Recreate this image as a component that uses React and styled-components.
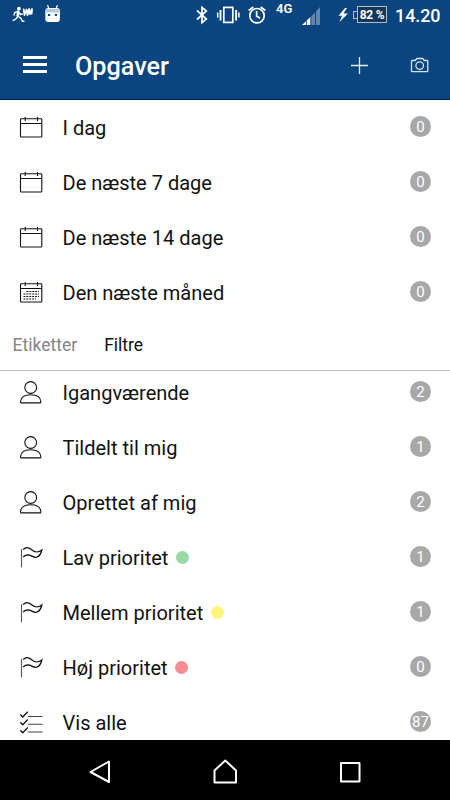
import React from "react"
import styled, { createGlobalStyle } from "styled-components"

const GlobalStyle = createGlobalStyle`
	* {
		box-sizing: border-box;
	}
	body {
		margin: 0;
		background: #fff;
		font-family: Roboto, "Noto Sans", sans-serif;
	}
	svg {
		display: block;
		flex: none;
	}
`

const Screen = styled.div`
	display: flex;
	flex-direction: column;
	width: 450px;
	height: 800px;
	overflow: hidden;
	background: #fff;
	color: #111;
`

const StatusBar = styled.div`
	display: flex;
	justify-content: space-between;
	height: 30px;
	flex: none;
	background: #0a4580;
	color: #fff;
`

const Clock = styled.div`
	width: 63px;
	padding-left: 8px;
	font-size: 18px;
	font-weight: 500;
	line-height: 32px;
	letter-spacing: -0.1px;
	white-space: nowrap;
`

const StatusRight = styled.div`
	display: flex;
`

const Network = styled.div`
	width: 26px;
	padding-left: 1px;
	font-size: 13px;
	font-weight: 600;
	line-height: 18px;
`

const Battery = styled.div`
	display: flex;
	align-items: center;
	width: 34px;
	height: 17px;
	margin-top: 6px;
`

const BatteryTip = styled.div`
	width: 4px;
	height: 8px;
	border: 1px solid #b9bdc2;
	border-right: 0;
`

const BatteryBody = styled.div`
	width: 30px;
	height: 17px;
	border: 1px solid #b9bdc2;
	background: #12365c;
	font-size: 12px;
	font-weight: 700;
	line-height: 16px;
	text-align: center;
	letter-spacing: -0.3px;
	white-space: nowrap;
`

const Toolbar = styled.header`
	display: flex;
	align-items: center;
	height: 70px;
	flex: none;
	padding: 0 20px 0 23px;
	border-bottom: 1px solid #02245c;
	background: #0a4580;
	color: #fff;
`

const MenuButton = styled.div`
	display: flex;
	flex-direction: column;
	gap: 4px;
	width: 24px;
`

const MenuLine = styled.span`
	height: 3px;
	background: #fff;
`

const Title = styled.h1`
	flex: 1;
	margin: 4px 0 0 28px;
	font-size: 25.2px;
	font-weight: 500;
	line-height: 30px;
`

const Actions = styled.div`
	display: flex;
	gap: 41px;
`

const List = styled.div`
	flex: none;
`

const ScrollArea = styled.div`
	flex: 1;
	min-height: 0;
	overflow: hidden;
`

const Scrolled = styled.div`
	margin-top: -6px;
`

const Row = styled.div`
	display: flex;
	align-items: center;
	height: 55px;
	padding: 0 19px;
`

const Label = styled.div`
	display: flex;
	align-items: center;
	flex: 1;
	margin: 1px 0 0 18.5px;
	font-size: 20.05px;
	line-height: 26px;
`

const Dot = styled.span`
	width: 13px;
	height: 13px;
	margin: -2px 0 0 7.5px;
	border-radius: 50%;
	background: ${({ $color }) => $color};
`

const Badge = styled.div`
	width: 21px;
	height: 21px;
	margin-bottom: 2px;
	border-radius: 50%;
	background: #a8a8a8;
	color: #fff;
	font-size: 15px;
	line-height: 22px;
	text-align: center;
`

const Tabs = styled.div`
	display: flex;
	gap: 27px;
	height: 51px;
	flex: none;
	padding-left: 12.6px;
	border-bottom: 1px solid #bdbdbd;
`

const Tab = styled.div`
	color: ${({ $active }) => ($active ? "#111" : "#858585")};
	font-size: 17.5px;
	line-height: 51px;
`

const NavBar = styled.nav`
	display: flex;
	align-items: center;
	justify-content: space-between;
	height: 60px;
	flex: none;
	padding: 4px 87px 0 87px;
	background: #000;
`

const Icon = ({ children }) => (
	<svg width='25' height='25' viewBox='0 0 25 25' fill='none' stroke='#111' strokeWidth='1.1'>
		{children}
	</svg>
)

const CalendarFrame = () => (
	<>
		<rect x='1.5' y='3.7' width='21.3' height='18.3' rx='0.8' />
		<path d='M1.5 8.5h21.3M6.2 2v4M18.5 2v4' />
	</>
)

const CalendarIcon = () => (
	<Icon>
		<CalendarFrame />
	</Icon>
)

const MonthIcon = () => (
	<Icon>
		<CalendarFrame />
		<path d='M7.5 11.5H20M4.5 14H20M4.5 16.5H20M4.500 19H17' strokeDasharray='1.9 1' strokeWidth='1.2' />
	</Icon>
)

const PersonIcon = () => (
	<Icon>
		<circle cx='11.7' cy='7.5' r='5.9' />
		<path d='M2.6 22.9C1.8 22.9 1.4 22.4 1.5 21.5C2 17.2 6.2 14.8 11.7 14.8S21.4 17.2 21.9 21.5C22 22.4 21.6 22.9 20.8 22.9Z' />
	</Icon>
)

const FlagIcon = () => (
	<Icon>
		<path d='M2.5 4v18.3' stroke='#555' />
		<path
			d='M4.2 4.5C6.5 2.2 9.5 2.2 12 4.3C15 7 18 8.6 22.8 5C22 8.5 20.8 11.5 17.6 12.2C14 12.9 12.5 10 9 9.9C7 9.9 5.6 10.6 4.2 12'
			strokeWidth='1.3'
		/>
	</Icon>
)

const ChecklistIcon = () => (
	<Icon>
		<path d='M8.8 6.5H23.5M8.8 14.3H23.5M8.8 22H23.5' stroke='#444' />
		<path d='M1.3 4.5L3.7 7L8.8 1.7M1.3 12.2L3.7 14.7L8.8 9.5M1.3 20.2L3.7 22.7L8.8 17.5' strokeWidth='1.3' />
	</Icon>
)

const RunnerIcon = () => (
	<svg width='60' height='30' viewBox='0 0 60 30' fill='none' stroke='#fff' strokeLinecap='round' strokeLinejoin='round'>
		<circle cx='18.9' cy='8.7' r='1.9' fill='#fff' stroke='none' />
		<path d='M18.3 11.5L17.7 16' strokeWidth='2.6' />
		<path d='M17.5 11.7L14.8 12.5L14 15M19 12.5L20.5 14.5L22.3 14M17.7 16.5L16 18.8L13.2 20.4M18.3 16.5L21 18.3L22.3 21.3H24' strokeWidth='1.4' />
		<path d='M23.7 9.5L24.5 15L26.5 9.5L27.5 15L29.2 9L30 14L32 9L31.7 13.5' strokeWidth='1.8' />
		<path d='M47.7 5.5L49 9M57.3 5.5L56 9' strokeWidth='1.2' />
		<rect x='45.3' y='8' width='14.6' height='14' rx='3' fill='#fff' stroke='none' />
		<rect x='45.8' y='9' width='13.6' height='3.4' rx='1' fill='#b5cbe0' stroke='none' />
		<rect x='48' y='14' width='2.2' height='2' fill='#0a4580' stroke='none' />
		<rect x='54.8' y='14' width='2.2' height='2' fill='#0a4580' stroke='none' />
	</svg>
)

const DeviceIcons = () => (
	<svg width='80' height='30' viewBox='195 0 80 30' fill='none' stroke='#fff' strokeWidth='1.7'>
		<path d='M197 10.5L206.3 19L202 22.6V7.3L206.3 11L197 19.5' />
		<rect x='223.8' y='7.4' width='9' height='15' />
		<path d='M220.5 10v10.5M236.1 10v10.5' strokeWidth='1.9' />
		<path d='M217.7 12.5v5M238.9 12.5v5' strokeWidth='1.5' />
		<circle cx='257' cy='15.7' r='7.2' />
		<path d='M256.6 11v5L260 18.3M248.7 10.5L253.3 7M265.3 10.5L260.7 7' />
	</svg>
)

const SignalIcon = () => (
	<svg width='52' height='30' viewBox='301 0 52 30'>
		<path d='M302 25L306 21.3V25Z' fill='#fff' />
		<path d='M306.8 20.5L310.3 17V25H306.8Z' fill='#fff' />
		<path d='M311.3 16L315 12.7V25H311.3Z' fill='#6487ad' />
		<path d='M316 11.6L320 7V25H316Z' fill='#6487ad' />
		<path d='M345 8L338.5 15.8H342L339.5 22L348 13.5H343.5L347 8Z' fill='#fff' />
	</svg>
)

const PlusIcon = () => (
	<svg width='20' height='20' viewBox='0 0 20 20' fill='none' stroke='#e6edf4' strokeWidth='1.3'>
		<path d='M10.5 2v17M2 10.5h17' />
	</svg>
)

const CameraIcon = () => (
	<svg width='20' height='20' viewBox='0 0 20 20' fill='none' stroke='#d6e2ee' strokeWidth='1.3' strokeLinejoin='round'>
		<path d='M2.3 5.5H5.2L6.8 3.5H12.8L14.4 5.5H17.1Q17.8 5.5 17.8 6.2V15.9Q17.8 16.7 17.1 16.7H2.3Q1.5 16.7 1.5 15.9V6.2Q1.5 5.5 2.3 5.5Z' />
		<circle cx='9.7' cy='10.6' r='3.8' />
	</svg>
)

const NavIcon = ({ d }) => (
	<svg width='26' height='26' viewBox='0 0 26 26' fill='none' stroke='#fff' strokeWidth='2' strokeLinejoin='round'>
		<path d={d} />
	</svg>
)

const periods = [
	{ label: "I dag", count: 0, icon: CalendarIcon },
	{ label: "De næste 7 dage", count: 0, icon: CalendarIcon },
	{ label: "De næste 14 dage", count: 0, icon: CalendarIcon },
	{ label: "Den næste måned", count: 0, icon: MonthIcon },
]

const filters = [
	{ label: "Igangværende", count: 2, icon: PersonIcon },
	{ label: "Tildelt til mig", count: 1, icon: PersonIcon },
	{ label: "Oprettet af mig", count: 2, icon: PersonIcon },
	{ label: "Lav prioritet", count: 1, icon: FlagIcon, color: "#9bd9a4" },
	{ label: "Mellem prioritet", count: 1, icon: FlagIcon, color: "#fff47c" },
	{ label: "Høj prioritet", count: 0, icon: FlagIcon, color: "#f68b90" },
	{ label: "Vis alle", count: 87, icon: ChecklistIcon },
]

const TaskRow = ({ label, count, icon: RowIcon, color }) => (
	<Row>
		<RowIcon />
		<Label>
			{label}
			{color && <Dot $color={color} />}
		</Label>
		<Badge>{count}</Badge>
	</Row>
)

const App = () => {
	return (
		<>
			<GlobalStyle />
			<Screen>
				<StatusBar>
					<RunnerIcon />
					<StatusRight>
						<DeviceIcons />
						<Network>4G</Network>
						<SignalIcon />
						<Battery>
							<BatteryTip />
							<BatteryBody>82 %</BatteryBody>
						</Battery>
						<Clock>14.20</Clock>
					</StatusRight>
				</StatusBar>
				<Toolbar>
					<MenuButton>
						<MenuLine />
						<MenuLine />
						<MenuLine />
					</MenuButton>
					<Title>Opgaver</Title>
					<Actions>
						<PlusIcon />
						<CameraIcon />
					</Actions>
				</Toolbar>
				<List>
					{periods.map((item) => (
						<TaskRow key={item.label} {...item} />
					))}
				</List>
				<Tabs>
					<Tab>Etiketter</Tab>
					<Tab $active>Filtre</Tab>
				</Tabs>
				<ScrollArea>
					<Scrolled>
						{filters.map((item) => (
							<TaskRow key={item.label} {...item} />
						))}
					</Scrolled>
				</ScrollArea>
				<NavBar>
					<NavIcon d='M22 2.5V23L3.5 13Z' />
					<NavIcon d='M2.5 11.5L13.3 1.5L24 11.5V23.5H2.5Z' />
					<NavIcon d='M4 4H22.5V22.5H4Z' />
				</NavBar>
			</Screen>
		</>
	)
}

export default App
